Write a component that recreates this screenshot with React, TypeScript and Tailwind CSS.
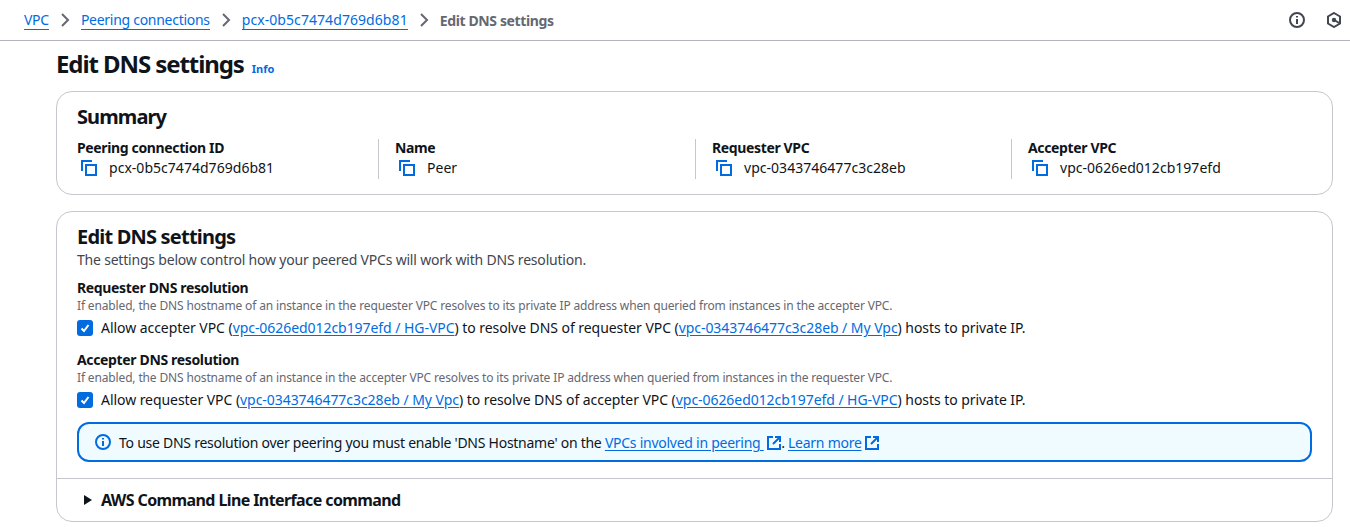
const F = "font-['Noto_Sans','Open_Sans',sans-serif]";
import React from "react";

function Chevron() {
  return (
    <svg width="16" height="16" viewBox="0 0 16 16" fill="none" stroke="#656871" strokeWidth="2" className="mx-[8px]">
      <path d="M5 2l6 6-6 6" />
    </svg>
  );
}
function Crumb({ children, wide }: { children: React.ReactNode; wide?: boolean }) {
  return <a className={`text-[#006ce0] border-b border-[#006ce0] leading-[17px] h-[19px] ${wide ? "tracking-[0.07px]" : "tracking-[-0.28px]"}`}>{children}</a>;
}
function Copy() {
  return (
    <svg width="16" height="16" viewBox="0 0 16 16" fill="none" stroke="#006ce0" strokeWidth="2" className="shrink-0">
      <path d="M1 11V1h10" />
      <rect x="5" y="5" width="10" height="10" />
    </svg>
  );
}
function External() {
  return (
    <svg width="14" height="14" viewBox="0 0 14 14" fill="none" stroke="#006ce0" strokeWidth="2" className="inline-block align-[-2px]">
      <path d="M6 1H1v12h12V8" />
      <path d="M8 1h5v5M13 1L6 8" />
    </svg>
  );
}
function Check() {
  return (
    <span className="w-4 h-4 rounded-[3px] bg-[#006ce0] flex items-center justify-center shrink-0">
      <svg width="12" height="12" viewBox="0 0 12 12" fill="none" stroke="#fff" strokeWidth="2">
        <path d="M2.5 6.5l2.5 2.5 4.5-6" />
      </svg>
    </span>
  );
}
function Field({ label, value, className }: { label: string; value: string; className: string }) {
  return (
    <div className={`h-10 shrink-0 ${className}`}>
      <div className="font-bold text-[14px] leading-[18px] text-[#0f141a] tracking-[-0.36px]">{label}</div>
      <div className="flex items-center text-[14px] leading-[20px] mt-[1px] text-[#0f141a] pl-1">
        <Copy />
        <span className="ml-3 tracking-[0.03px]">{value}</span>
      </div>
    </div>
  );
}
function L({ children }: { children: React.ReactNode }) {
  return <a className="text-[#006ce0] underline underline-offset-2">{children}</a>;
}
function Setting({ title, desc, children }: { title: string; desc: string; children: React.ReactNode }) {
  return (
    <div>
      <div className="font-bold text-[14px] leading-[20px] text-[#0f141a] tracking-[-0.35px]">{title}</div>
      <div className="text-[12px] leading-[16px] text-[#656871] tracking-[-0.15px]">{desc}</div>
      <div className="flex items-center mt-[4px] text-[14px] leading-[20px] text-[#0f141a] tracking-[-0.055px]">
        <Check />
        <span className="ml-2 whitespace-nowrap">{children}</span>
      </div>
    </div>
  );
}

export default function App() {
  return (
    <div className={`${F} w-[1350px] h-[527px] overflow-hidden bg-white`}>
      <div className="h-[41px] border-b border-[#b4b4bb] flex items-center pl-6 pr-[8px] text-[14px]">
        <Crumb>VPC</Crumb>
        <Chevron />
        <Crumb>Peering connections</Crumb>
        <Chevron />
        <Crumb wide>pcx-0b5c7474d769d6b81</Crumb>
        <Chevron />
        <span className="font-bold text-[#656871] tracking-[-0.37px]">Edit DNS settings</span>
        <div className="ml-auto flex items-center gap-[21px]">
          <svg width="16" height="16" viewBox="0 0 16 16" fill="none" stroke="#424650" strokeWidth="2">
            <circle cx="8" cy="8" r="7" />
            <path d="M8 7v5M8 4v1.6" />
          </svg>
          <svg width="16" height="16" viewBox="0 0 16 16" fill="none" stroke="#424650" strokeWidth="2">
            <path d="M8 1l6 3.5v7L8 15l-6-3.5v-7z" />
            <circle cx="8" cy="8" r="2.2" fill="#424650" stroke="none" />
            <path d="M9 8.5l5 3" />
          </svg>
        </div>
      </div>
      <div className="pl-[56px] pr-[17px]">
        <div className="flex items-baseline h-[50px] pt-[7px]">
          <h1 className="text-[24px] leading-[32px] font-bold text-[#0f141a] tracking-[-1.08px]">Edit DNS settings</h1>
          <a className="ml-2 text-[11px] font-bold text-[#006ce0]">Info</a>
        </div>
        <section className="h-[104px] border border-[#c6c6cd] rounded-2xl px-5 pt-[11px]">
          <h2 className="text-[20px] leading-[28px] font-bold text-[#0f141a] tracking-[-0.9px]">Summary</h2>
          <div className="flex mt-[8px]">
            <Field className="w-[301px]" label="Peering connection ID" value="pcx-0b5c7474d769d6b81" />
            <Field className="w-[317px] border-l border-[#c6c6cd] pl-4" label="Name" value="Peer" />
            <Field className="w-[316px] border-l border-[#c6c6cd] pl-4" label="Requester VPC" value="vpc-0343746477c3c28eb" />
            <Field className="w-[300px] border-l border-[#c6c6cd] pl-4" label="Accepter VPC" value="vpc-0626ed012cb197efd" />
          </div>
        </section>
        <section className="mt-4 h-[311px] border border-[#c6c6cd] rounded-2xl overflow-hidden">
          <div className="px-5 pt-[11px]">
            <h2 className="text-[20px] leading-[28px] font-bold text-[#0f141a] tracking-[-0.8px]">Edit DNS settings</h2>
            <p className="text-[14px] leading-[20px] text-[#424650] tracking-[-0.2px] -mt-[1px]">
              The settings below control how your peered VPCs will work with DNS resolution.
            </p>
            <div className="mt-[8px]">
              <Setting
                title="Requester DNS resolution"
                desc="If enabled, the DNS hostname of an instance in the requester VPC resolves to its private IP address when queried from instances in the accepter VPC."
              >
                Allow accepter VPC (<L>vpc-0626ed012cb197efd / HG-VPC</L>) to resolve DNS of requester VPC (<L>vpc-0343746477c3c28eb / My Vpc</L>) hosts to private IP.
              </Setting>
            </div>
            <div className="mt-[12px]">
              <Setting
                title="Accepter DNS resolution"
                desc="If enabled, the DNS hostname of an instance in the accepter VPC resolves to its private IP address when queried from instances in the requester VPC."
              >
                Allow requester VPC (<L>vpc-0343746477c3c28eb / My Vpc</L>) to resolve DNS of accepter VPC (<L>vpc-0626ed012cb197efd / HG-VPC</L>) hosts to private IP.
              </Setting>
            </div>
            <div className="mt-[12px] h-[40px] border-2 border-[#006ce0] rounded-xl bg-[#f0fbff] flex items-center pl-4 text-[14px] text-[#0f141a] tracking-[-0.26px]">
              <svg width="16" height="16" viewBox="0 0 16 16" fill="none" stroke="#006ce0" strokeWidth="2" className="shrink-0">
                <circle cx="8" cy="8" r="7" />
                <path d="M8 7v5M8 4v1.6" />
              </svg>
              <span className="ml-2 whitespace-nowrap">
                To use DNS resolution over peering you must enable 'DNS Hostname' on the <L>VPCs involved in peering&nbsp;</L> <External />. <L>Learn more</L>&nbsp;<External />
              </span>
            </div>
          </div>
          <div className="mt-4 border-t border-[#c6c6cd] h-[44px] flex items-center pl-5 pb-[2px]">
            <svg width="16" height="16" viewBox="0 0 16 16" fill="#0f141a" className="ml-[3px]">
              <path d="M4 3l8 5-8 5z" />
            </svg>
            <span className="ml-[5px] text-[16px] font-bold text-[#0f141a] tracking-[-0.6px]">AWS Command Line Interface command</span>
          </div>
        </section>
      </div>
    </div>
  );
}
